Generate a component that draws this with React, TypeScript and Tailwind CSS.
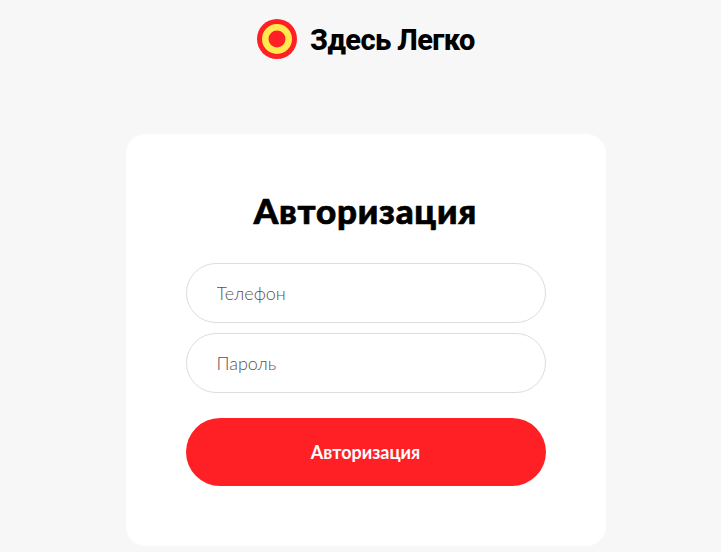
export default function App() {
  return (
    <div className="h-[552px] overflow-hidden bg-[#f7f7f7] pl-[10px] flex flex-col items-center font-['Lato',sans-serif]">
      <div className="h-[79px] pt-[19px] flex items-start gap-[13px] pl-[1px]">
        <svg width="40" height="40" viewBox="0 0 40 40" className="shrink-0">
          <circle cx="20" cy="20" r="20" fill="#ff2026" />
          <circle cx="20" cy="20" r="15" fill="#ffe94f" />
          <circle cx="20" cy="20" r="8.5" fill="#ff2026" />
        </svg>
        <span className="w-[165px] pt-[1px] whitespace-nowrap text-[29px] leading-[40px] font-extrabold text-black font-['Roboto',sans-serif] tracking-[-0.6px]">Здесь Легко</span>
      </div>
      <div className="mt-[55px] w-[480px] h-[412px] shrink-0 rounded-[20px] bg-white px-[60px] flex flex-col">
        <h1 className="mt-[55px] h-[42px] text-center text-[35px] leading-[42px] font-black text-black tracking-[0.8px] [-webkit-text-stroke:0.7px_black]">Авторизация</h1>
        <div className="mt-[32px] flex flex-col gap-[10px]">
          <input placeholder="Телефон" className="h-[60px] w-full rounded-[30px] border border-[#dddddd] bg-white px-[30px] text-[18px] font-light text-[#555] placeholder:text-[#555] outline-none" />
          <input placeholder="Пароль" className="h-[60px] w-full rounded-[30px] border border-[#dddddd] bg-white px-[30px] text-[18px] font-light text-[#555] placeholder:text-[#555] outline-none" />
        </div>
        <button className="mt-[25px] h-[68px] w-full rounded-[34px] bg-[#ff2026] pt-[1px] text-white text-[18px] font-bold">Авторизация</button>
      </div>
    </div>
  );
}
